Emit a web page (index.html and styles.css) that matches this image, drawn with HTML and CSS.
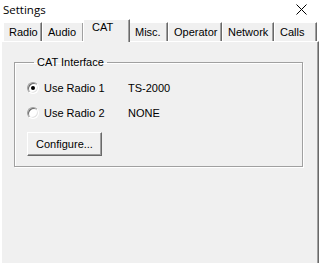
FILE: index.html
```html
<!DOCTYPE html>
<html lang="en">
<head>
  <meta charset="UTF-8">
  <title>Settings</title>
  <link rel="stylesheet" href="styles.css">
</head>
<body>
  <div class="janela">
    <div class="barra-titulo">
      <span class="titulo">Settings</span>
      <svg class="fechar" width="11" height="11" viewBox="0 0 11 11">
        <path d="M0.5 0.5 L10.5 10.5 M10.5 0.5 L0.5 10.5" stroke="#000" stroke-width="1" fill="none"/>
      </svg>
    </div>

    <div class="abas">
      <div class="aba aba-radio">Radio</div>
      <div class="aba aba-audio">Audio</div>
      <div class="aba aba-cat selecionada">CAT</div>
      <div class="aba aba-misc">Misc.</div>
      <div class="aba aba-operator">Operator</div>
      <div class="aba aba-network">Network</div>
      <div class="aba aba-calls">Calls</div>
    </div>

    <div class="pagina">
      <fieldset class="grupo">
        <legend>CAT Interface</legend>

        <div class="linha">
          <span class="radio marcado"></span>
          <span class="rotulo">Use Radio 1</span>
          <span class="valor">TS-2000</span>
        </div>
        <div class="linha">
          <span class="radio"></span>
          <span class="rotulo">Use Radio 2</span>
          <span class="valor">NONE</span>
        </div>

        <button class="botao">Configure...</button>
      </fieldset>
    </div>
  </div>
</body>
</html>
```

FILE: styles.css
```css
body {
  margin: 0;
  background: #ffffff;
  font-family: "Liberation Sans", Arial, sans-serif;
  font-size: 11px;
  color: #000000;
}

.janela {
  width: 320px;
  height: 263px;
  display: flex;
  flex-direction: column;
  overflow: hidden;
}

.barra-titulo {
  height: 19px;
  display: flex;
  justify-content: space-between;
  align-items: center;
  padding: 0 13px 0 3px;
}

.titulo {
  font-family: "Open Sans", sans-serif;
  font-size: 11.5px;
  color: #000000;
}

.abas {
  height: 22px;
  display: flex;
  align-items: flex-end;
  padding-left: 3px;
}

.aba {
  box-sizing: border-box;
  height: 19px;
  padding: 3px 0 0 5px;
  background: #f0f0f0;
  border-top: 1px solid #ffffff;
  border-left: 1px solid #ffffff;
  border-right: 1px solid #696969;
  box-shadow: inset -1px 0 0 #a0a0a0;
  white-space: nowrap;
}

.aba-radio { width: 39px; }
.aba-audio { width: 42px; }
.aba-cat { width: 45px; }
.aba-misc { width: 39px; }
.aba-operator { width: 54px; }
.aba-network { width: 52px; }
.aba-calls { width: 43px; }

.selecionada {
  width: 47px;
  height: 23px;
  margin: 0 -1px -1px -1px;
  padding: 1px 0 0 8px;
  position: relative;
  z-index: 1;
}

.pagina {
  flex: 1;
  background: #f0f0f0;
  border-top: 1px solid #ffffff;
  border-left: 1px solid #ffffff;
  border-right: 1px solid #696969;
  box-shadow: inset -1px 0 0 #a0a0a0;
  margin-left: 1px;
  margin-right: 1px;
  padding: 14px 15px 0 12px;
}

.grupo {
  margin: 0;
  padding: 6px 12px 10px 12px;
  border: 1px solid #a0a0a0;
  box-shadow: 1px 1px 0 #ffffff, inset 1px 1px 0 #ffffff;
}

.grupo legend {
  margin-left: 7px;
  padding: 0 3px;
  line-height: 13px;
}

.linha {
  height: 25px;
  display: flex;
  align-items: center;
}

.radio {
  box-sizing: border-box;
  width: 12px;
  height: 12px;
  border-radius: 50%;
  background: #ffffff;
  border: 1px solid;
  border-color: #a0a0a0 #ffffff #ffffff #a0a0a0;
  box-shadow: inset 1px 1px 0 #696969, inset -1px -1px 0 #e3e3e3;
  display: flex;
  justify-content: center;
  align-items: center;
}

.marcado::after {
  content: "";
  width: 4px;
  height: 4px;
  border-radius: 50%;
  background: #000000;
}

.rotulo {
  margin-left: 5px;
  width: 84px;
}

.botao {
  margin-top: 7px;
  width: 75px;
  height: 24px;
  background: #f0f0f0;
  font-family: "Liberation Sans", Arial, sans-serif;
  font-size: 11px;
  color: #000000;
  border: 1px solid;
  border-color: #ffffff #696969 #696969 #ffffff;
  box-shadow: inset -1px -1px 0 #a0a0a0;
  padding: 0;
}
```
